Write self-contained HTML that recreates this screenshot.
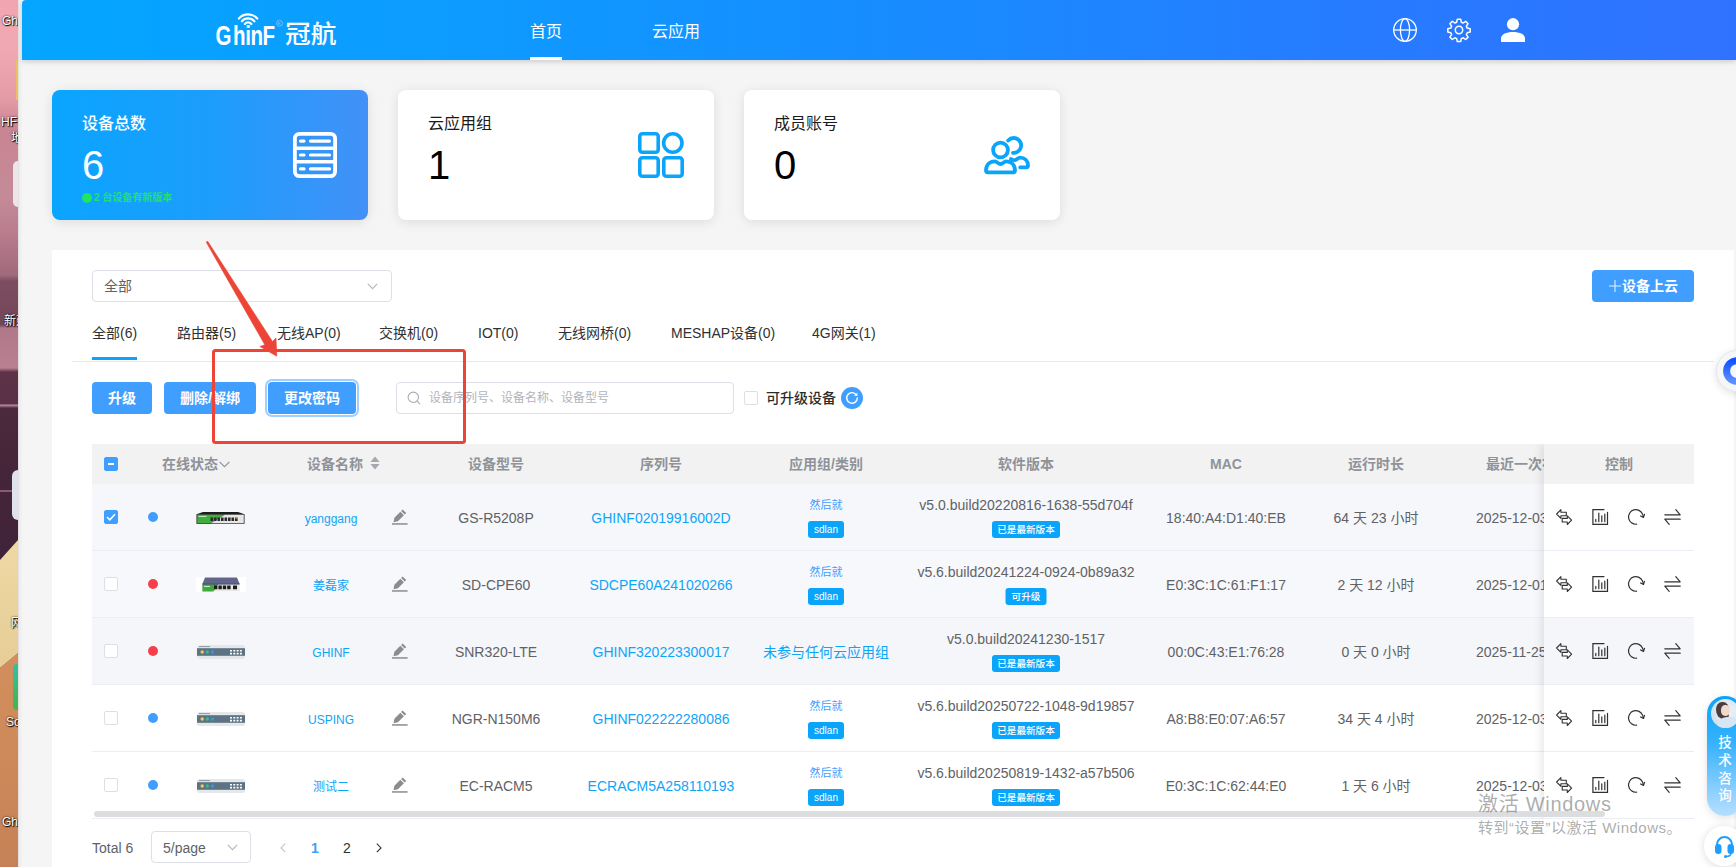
<!DOCTYPE html>
<html lang="zh-CN">
<head>
<meta charset="utf-8">
<title>冠航云平台 - 首页</title>
<style>
*{box-sizing:border-box;margin:0;padding:0}
html,body{width:1736px;height:867px;overflow:hidden;background:#f5f5f5}
body{position:relative;font-family:"Liberation Sans","Noto Sans CJK SC",sans-serif;font-size:14px;color:#606266;-webkit-font-smoothing:antialiased}
.abs{position:absolute}
.t{position:absolute;white-space:nowrap;line-height:20px;height:20px}
.c{transform:translateX(-50%);text-align:center}
svg{position:absolute;overflow:visible}
/* left desktop strip */
#desk{left:0;top:0;width:18px;height:867px;overflow:hidden;background:linear-gradient(180deg,#f2a5b0 0,#f0a9b3 50px,#e39aa5 100px,#c98593 130px,#c48a98 200px,#b87c8c 235px,#a06a7c 275px,#7d4c60 281px,#74465a 325px,#b07888 328px,#b88090 368px,#5e3348 372px,#5a3046 404px,#c090a0 405px,#4c2a3e 408px,#452539 470px,#40233a 556px,#3f2239 700px,#c58256 701px,#c58256 867px)}
#desk .dl{position:absolute;color:#fff;font-size:12px;line-height:14px;white-space:nowrap;text-shadow:0 0 2px #000,1px 1px 1px #000}
#frame{left:18px;top:0;width:4px;height:867px;background:linear-gradient(90deg,#d9d4d6 0,#ededed 1px,#f2f2f2 100%)}
/* header */
#hdr{left:22px;top:0;width:1714px;height:60px;border-top-left-radius:4px;background:linear-gradient(90deg,#04a6ff 0%,#0d9bff 25%,#178dff 50%,#257dff 75%,#3072ff 100%);box-shadow:0 2px 5px rgba(0,0,0,.16)}
.nav{color:#fff;font-size:16px;line-height:22px;height:22px}
/* cards */
.card{position:absolute;top:90px;width:316px;height:130px;border-radius:8px;background:#fff;box-shadow:0 2px 12px rgba(0,0,0,.10)}
.card .ttl{position:absolute;left:30px;top:23px;font-size:16px;line-height:22px;color:#1a1a1a;white-space:nowrap}
.card .num{position:absolute;left:30px;top:52px;font-size:40px;line-height:46px;color:#000;white-space:nowrap}
#c1{left:52px;background:linear-gradient(90deg,#0aa5ff 0%,#1c9dfc 50%,#4291f7 100%)}
#c1 .ttl,#c1 .num{color:#fff}
#c1 .ttl{font-weight:500}
/* panel */
#panel{left:52px;top:250px;width:1682px;height:617px;background:#fff}
.sel{position:absolute;border:1px solid #dcdfe6;border-radius:4px;background:#fff}
.btn{position:absolute;top:382px;height:32px;border-radius:4px;background:#409eff;color:#fff;font-weight:700;font-size:14px;line-height:32px;text-align:center;white-space:nowrap}
.tab{font-size:14px;color:#303133}
.th{color:#8f9299;font-weight:700;font-size:14px}
.row{position:absolute;left:92px;width:1602px;height:67px;border-bottom:1px solid #ebeef5}
.lk{color:#0ea5f7}
.tag{position:absolute;height:17px;border-radius:3px;background:#0aa5fb;color:#fff;font-size:9.6px;font-weight:500;line-height:17px;text-align:center;white-space:nowrap;transform:translateX(-50%)}
.cb{position:absolute;width:14px;height:14px;border:1px solid #dcdfe6;border-radius:2px;background:#fff}
.cb.on{background:#409eff;border-color:#409eff}
.dot{position:absolute;width:10px;height:10px;border-radius:50%}
</style>
</head>
<body>
<!-- desktop strip visible at the left of the browser window -->
<div id="desk" class="abs">
  <div class="abs" style="left:0;top:520px;width:18px;height:347px;background:linear-gradient(180deg,#d8935f 0,#d08b5b 60%,#c58256 100%);clip-path:polygon(0 148px,18px 133px,18px 347px,0 347px)"></div>
  <div class="abs" style="left:0;top:520px;width:18px;height:160px;background:linear-gradient(180deg,#efdaa6,#e6cc95);clip-path:polygon(0 40px,18px 20px,18px 133px,0 148px)"></div>
  <div class="abs" style="left:0;top:490px;width:18px;height:2px;background:#8a5a70"></div>
  <span class="dl" style="left:2px;top:14px">Gh</span>
  <span class="dl" style="left:1px;top:115px">HF</span>
  <span class="dl" style="left:11px;top:131px">地</span>
  <span class="dl" style="left:4px;top:314px">新建</span>
  <span class="dl" style="left:11px;top:616px">网</span>
  <span class="dl" style="left:6px;top:715px">So</span>
  <span class="dl" style="left:2px;top:815px">Gh</span>
  <div class="abs" style="left:13px;top:161px;width:12px;height:46px;border-radius:5px 0 0 5px;background:#ece6ea"></div>
  <div class="abs" style="left:12px;top:470px;width:12px;height:50px;border-radius:6px 0 0 6px;background:#dfe3ee"></div>
  <div class="abs" style="left:13px;top:664px;width:10px;height:46px;border-radius:4px 0 0 4px;background:linear-gradient(180deg,#2fc3a0,#49b24a)"></div>
  <div class="abs" style="left:15.500px;top:60px;width:4px;height:40px;background:#ecc060"></div>
</div>
<div id="frame" class="abs"></div>

<!-- top header -->
<div id="hdr" class="abs"></div>
<!-- logo -->
<svg style="left:214px;top:12px" width="126" height="36" viewBox="0 0 126 36" fill="none">
  <g stroke="#fff" stroke-linecap="round" fill="none" stroke-width="2.200">
    <path d="M24.900 6.550A12.400 12.400 0 0 1 43.300 6.550"/>
    <path d="M27.860 9.230A8.400 8.400 0 0 1 40.340 9.230"/>
    <path d="M30.830 11.910A4.400 4.400 0 0 1 37.370 11.910"/>
  </g>
  <circle cx="65.500" cy="11.300" r="3" stroke="#fff" stroke-opacity=".55" stroke-width=".600"/>
  <text transform="scale(.76,1)" x="2 24.900 41.100 48.200 63.800" y="32.700" font-family="'Liberation Sans',sans-serif" font-weight="700" font-size="27" fill="#fff">GhinF</text>
  <text x="71" y="30.900" font-family="'Liberation Sans','Noto Sans CJK SC',sans-serif" font-weight="500" font-size="24.500" fill="#fff" textLength="51.500" lengthAdjust="spacingAndGlyphs">冠航</text>
  <text x="63.600" y="12.800" font-family="'Liberation Sans',sans-serif" font-size="4" fill="#fff" fill-opacity=".6">R</text>
</svg>
<div class="t nav" style="left:530px;top:21px">首页</div>
<div class="abs" style="left:530px;top:57px;width:32px;height:3px;background:#fff"></div>
<div class="t nav" style="left:652px;top:21px">云应用</div>
<!-- header icons -->
<svg style="left:1393px;top:18px" width="24" height="24" viewBox="0 0 24 24" fill="none" stroke="#fff" stroke-width="1.3">
  <circle cx="12" cy="12" r="11.3"/><ellipse cx="12" cy="12" rx="4.6" ry="11.3"/><path d="M.7 12h22.6"/>
</svg>
<svg style="left:1447px;top:18px" width="24" height="24" viewBox="0 0 24 24" fill="none" stroke="#fff" stroke-width="1.5" stroke-linejoin="round">
  <path d="M10.3 1.2h3.4l.6 3 1.9.8 2.5-1.7 2.4 2.4-1.700 2.500.8 1.9 3 .6v3.400l-3 .6-.8 1.9 1.700 2.500-2.400 2.400-2.500-1.700-1.900.8-.6 3h-3.400l-.6-3-1.900-.8-2.500 1.700-2.400-2.400 1.700-2.500-.8-1.900-3-.6v-3.400l3-.6.8-1.900-1.700-2.500 2.400-2.400 2.500 1.700 1.900-.8z"/>
  <circle cx="12" cy="12" r="3.700"/>
</svg>
<svg style="left:1501px;top:18px" width="24" height="24" viewBox="0 0 24 24" fill="#fff">
  <circle cx="12" cy="6.200" r="6.100"/><path d="M0 24v-3.600c0-4.200 5.500-6.400 12-6.400s12 2.200 12 6.400V24z"/>
</svg>
<!-- stat cards -->
<div class="card" id="c1">
  <div class="ttl">设备总数</div>
  <div class="num">6</div>
  <div class="abs" style="left:30px;top:103px;width:10px;height:10px;border-radius:50%;background:#1ee562"></div>
  <div class="t" style="left:42px;top:101px;font-size:10px;line-height:14px;height:14px;font-weight:700;color:#22e06a">2 台设备有新版本</div>
  <svg style="left:241px;top:42px" width="44" height="46" viewBox="0 0 44 46" fill="none" stroke="#fff" stroke-linecap="round">
    <rect x="1.900" y="1.900" width="40.200" height="42.200" rx="4.500" stroke-width="3.800"/>
    <path d="M2 16.200h40M2 29.800h40" stroke-width="3.600"/>
    <path d="M7.500 9.100h3.500M17.500 9.100h19M7.500 23h3.500M17.500 23h19M7.500 36.900h3.500M17.500 36.900h19" stroke-width="3.200"/>
  </svg>
</div>
<div class="card" style="left:398px">
  <div class="ttl">云应用组</div>
  <div class="num">1</div>
  <svg style="left:240px;top:42px" width="46" height="46" viewBox="0 0 46 46" fill="none" stroke="#0aa5fb" stroke-width="3.600">
    <rect x="1.800" y="1.800" width="18.400" height="18.400" rx="2.500"/>
    <circle cx="34.800" cy="11" r="9.200"/>
    <rect x="1.800" y="25.800" width="18.400" height="18.400" rx="2.500"/>
    <rect x="25.800" y="25.800" width="18.400" height="18.400" rx="2.500"/>
  </svg>
</div>
<div class="card" style="left:744px">
  <div class="ttl">成员账号</div>
  <div class="num">0</div>
  <svg style="left:239px;top:45px" width="48" height="40" viewBox="0 0 48 40" fill="none" stroke="#0aa5fb" stroke-width="3.800" stroke-linecap="round" stroke-linejoin="round">
    <circle cx="17.500" cy="15" r="7.400"/>
    <path d="M25.200 5.500a7.400 7.400 0 1 1 4.800 12.300"/>
    <path d="M3 35.600c0-5.500 3.600-9.200 9-9.200 2 0 3.300 2.600 5.500 2.600s3.500-2.600 5.500-2.600c5.400 0 9 3.700 9 9.200 0 1.200-.8 1.800-1.800 1.800H4.800c-1 0-1.800-.6-1.800-1.800z"/>
    <path d="M28 23.900c1.200.9 2.300 1.300 3.400 1.300 2.200 0 3.300-2.600 5.600-2.600 4.800 0 8 3.400 8 7.800 0 1.200-.7 1.900-1.800 1.900h-6"/>
  </svg>
</div>
<!-- main panel -->
<div id="panel" class="abs"></div>
<div class="sel" style="left:92px;top:270px;width:300px;height:32px"></div>
<div class="t" style="left:104px;top:276px;color:#606266">全部</div>
<svg style="left:367px;top:283px" width="11" height="7" viewBox="0 0 11 7" fill="none" stroke="#b4b8bf" stroke-width="1.200"><path d="M.8.900l4.700 4.700L10.200.900"/></svg>
<div class="btn" style="left:1592px;top:270px;width:102px;text-align:left;padding-left:30px">设备上云</div>
<svg style="left:1609px;top:280px" width="12" height="12" viewBox="0 0 12 12" stroke="#fff" stroke-opacity=".85" stroke-width="1.100"><path d="M6 0v12M0 6h12"/></svg>

<!-- tabs -->
<div class="abs" style="left:72px;top:361px;width:1642px;height:1px;background:#e8e8e8"></div>
<div class="abs" style="left:92px;top:357px;width:45px;height:3px;background:#0aa5fb"></div>
<div class="t tab" style="left:92px;top:323px">全部(6)</div>
<div class="t tab" style="left:177px;top:323px">路由器(5)</div>
<div class="t tab" style="left:277px;top:323px">无线AP(0)</div>
<div class="t tab" style="left:379px;top:323px">交换机(0)</div>
<div class="t tab" style="left:478px;top:323px">IOT(0)</div>
<div class="t tab" style="left:558px;top:323px">无线网桥(0)</div>
<div class="t tab" style="left:671px;top:323px">MESHAP设备(0)</div>
<div class="t tab" style="left:812px;top:323px">4G网关(1)</div>

<!-- toolbar -->
<div class="btn" style="left:92px;width:60px">升级</div>
<div class="btn" style="left:164px;width:92px">删除/解绑</div>
<div class="btn" style="left:268px;width:88px;box-shadow:0 0 0 1px #fff,0 0 0 3px #a0cfff">更改密码</div>
<div class="sel" style="left:396px;top:382px;width:338px;height:32px"></div>
<svg style="left:407px;top:391px" width="14" height="14" viewBox="0 0 14 14" fill="none" stroke="#a8abb2" stroke-width="1.100" stroke-linecap="round"><circle cx="6.300" cy="6.300" r="5.200"/><path d="M10.200 10.200l2.600 2.600"/></svg>
<div class="t" style="left:429px;top:388px;font-size:12px;color:#b1b4bb">设备序列号、设备名称、设备型号</div>
<div class="cb" style="left:744px;top:391px"></div>
<div class="t" style="left:766px;top:388px;font-weight:500;color:#2b2b2b">可升级设备</div>
<svg style="left:841px;top:387px" width="22" height="22" viewBox="0 0 22 22" fill="none"><circle cx="11" cy="11" r="11" fill="#409eff"/><path d="M15.600 8.300A5.300 5.300 0 1 0 16.300 11" stroke="#fff" stroke-width="1.400" stroke-linecap="round"/><path d="M16.400 5.400v3.400H13z" fill="#fff"/></svg>
<!-- table header -->
<div class="abs" style="left:92px;top:444px;width:1602px;height:40px;background:#f2f2f2"></div>
<div class="abs" id="tbody" style="left:92px;top:444px;width:1452px;height:375px;overflow:hidden">
<div class="cb on" style="left:12px;top:13px"></div><div class="abs" style="left:16px;top:19px;width:6px;height:2px;background:#fff"></div>
<div class="t th" style="left:70px;top:10px;">在线状态</div>
<svg style="left:127px;top:17px" width="11" height="7" viewBox="0 0 11 7" fill="none" stroke="#8f9299" stroke-width="1.100"><path d="M.600.800l4.900 4.900L10.400.800"/></svg>
<div class="t th" style="left:215px;top:10px;">设备名称</div>
<svg style="left:278px;top:12px" width="10" height="14" viewBox="0 0 10 14" fill="#a5a8ae"><path d="M5 .500l4.600 5.500H.400zM5 13.500L.400 8h9.200z"/></svg>
<div class="t c th" style="left:404px;top:10px;">设备型号</div>
<div class="t c th" style="left:569px;top:10px;">序列号</div>
<div class="t c th" style="left:734px;top:10px;">应用组/类别</div>
<div class="t c th" style="left:934px;top:10px;">软件版本</div>
<div class="t c th" style="left:1134px;top:10px;">MAC</div>
<div class="t c th" style="left:1284px;top:10px;">运行时长</div>
<div class="t th" style="left:1394px;top:10px;">最近一次在线时间</div>
<div class="row" style="left:0;top:40px;background:#f6f7fb"></div>
<div class="cb on" style="left:12px;top:66px"></div><svg style="left:14px;top:69px" width="10" height="8" viewBox="0 0 10 8" fill="none" stroke="#fff" stroke-width="1.500"><path d="M1 4l2.800 2.800L9 1.200"/></svg>
<div class="dot" style="left:56px;top:68px;background:#409eff"></div>
<svg style="left:104px;top:68px" width="49" height="12" viewBox="0 0 49 12"><path d="M7 0h35l6.500 2.200H.500z" fill="#1d1d1d"/><rect x=".5" y="2.200" width="48" height="9.600" fill="#161616"/><path d="M1.200 2.800h27.500L15 11.200H1.200z" fill="#3fae3c"/><path d="M28.700 2.800H47.800v8.400H15z" fill="#e6e6e6"/><path d="M14.500 5.600h2.600v3.400h-2.600zM18 5.600h2.600v3.400H18zM21.500 5.600h2.600v3.400h-2.600zM25 5.600h2.600v3.400H25zM28.500 5.600h2.600v3.400h-2.600zM32 5.600h2.600v3.400H32zM35.500 5.600h2.600v3.400h-2.600zM39 5.600h2.600v3.400H39z" fill="#2a2a2a"/><path d="M39.400 6.200h1.800" stroke="#d8a040" stroke-width="1"/><path d="M2.500 4.400h8" stroke="#c9efc4" stroke-width="1"/></svg>
<div class="t c lk" style="left:239px;top:65px;font-size:12px">yanggang</div>
<svg style="left:300px;top:65px" width="16" height="16" viewBox="0 0 16 16" fill="#8c8c8c"><path d="M10.600.400l3.600 3.600-1.500 1.500-3.600-3.600zM8.300 2.700l3.600 3.600-6 6-4.400 1 .9-4.500z"/><rect x="0" y="14.200" width="15.600" height="1.500"/></svg>
<div class="t c " style="left:404px;top:64px;">GS-R5208P</div>
<div class="t c lk" style="left:569px;top:64px;">GHINF02019916002D</div>
<div class="t c " style="left:734px;top:51px;font-size:11px;color:#409eff">然后就</div>
<div class="tag" style="left:734px;top:77px;width:36px;font-size:10px">sdlan</div>
<div class="t c " style="left:934px;top:51px;">v5.0.build20220816-1638-55d704f</div>
<div class="tag" style="left:934px;top:77px;width:68px">已是最新版本</div>
<div class="t c " style="left:1134px;top:64px;">18:40:A4:D1:40:EB</div>
<div class="t c " style="left:1284px;top:64px;">64 天 23 小时</div>
<div class="t " style="left:1384px;top:64px;">2025-12-03</div>
<div class="row" style="left:0;top:107px;background:#f7f8fb"></div>
<div class="cb" style="left:12px;top:133px"></div>
<div class="dot" style="left:56px;top:135px;background:#f5404b"></div>
<svg style="left:104px;top:133px" width="50" height="15" viewBox="0 0 50 15"><rect width="50" height="15" fill="#fff"/><path d="M9 .600h32l2.600 6.400H6.400z" fill="#62658a"/><rect x="6.400" y="7" width="37.200" height="7.400" fill="#e8e8e4"/><path d="M6.400 7h16l-5 7.400h-11z" fill="#3daa3b"/><rect x="6.400" y="6.400" width="37.200" height="1.200" fill="#4e5173"/><path d="M18 8.600h3.400v3.600H18zM22.400 8.600h3.400v3.600h-3.400zM26.800 8.600h3.400v3.600h-3.400zM31.200 8.600h3.400v3.600h-3.400zM37 8.600h4v3.600h-4z" fill="#1b1b1b"/><path d="M8 9.400h6" stroke="#d8f3d4" stroke-width="1"/></svg>
<div class="t c lk" style="left:239px;top:132px;font-size:12px">姜磊家</div>
<svg style="left:300px;top:132px" width="16" height="16" viewBox="0 0 16 16" fill="#8c8c8c"><path d="M10.600.400l3.600 3.600-1.500 1.500-3.600-3.600zM8.300 2.700l3.600 3.600-6 6-4.400 1 .9-4.500z"/><rect x="0" y="14.200" width="15.600" height="1.500"/></svg>
<div class="t c " style="left:404px;top:131px;">SD-CPE60</div>
<div class="t c lk" style="left:569px;top:131px;">SDCPE60A241020266</div>
<div class="t c " style="left:734px;top:118px;font-size:11px;color:#409eff">然后就</div>
<div class="tag" style="left:734px;top:144px;width:36px;font-size:10px">sdlan</div>
<div class="t c " style="left:934px;top:118px;">v5.6.build20241224-0924-0b89a32</div>
<div class="tag" style="left:934px;top:144px;width:41px">可升级</div>
<div class="t c " style="left:1134px;top:131px;">E0:3C:1C:61:F1:17</div>
<div class="t c " style="left:1284px;top:131px;">2 天 12 小时</div>
<div class="t " style="left:1384px;top:131px;">2025-12-01</div>
<div class="row" style="left:0;top:174px;background:#f5f6fa"></div>
<div class="cb" style="left:12px;top:200px"></div>
<div class="dot" style="left:56px;top:202px;background:#f5404b"></div>
<svg style="left:105px;top:201px" width="48" height="14" viewBox="0 0 48 14"><rect width="48" height="14" rx="2.500" fill="#e4e8eb"/><rect y="3.200" width="48" height="7.600" fill="#5d7283"/><path d="M2 1.600h11" stroke="#8a98a3" stroke-width="1"/><circle cx="5.200" cy="7" r="1.700" fill="#f6c944"/><circle cx="10.300" cy="7" r="1.700" fill="#2ebd93"/><circle cx="15.400" cy="7" r="1.700" fill="#2d9be0"/><path d="M33 5h2v1.600h-2zM36.300 5h2v1.600h-2zM39.600 5h2v1.600h-2zM42.900 5h2v1.600h-2zM33 7.800h2v1.600h-2zM36.300 7.800h2v1.600h-2zM39.600 7.800h2v1.600h-2zM42.900 7.800h2v1.600h-2z" fill="#fff"/></svg>
<div class="t c lk" style="left:239px;top:199px;font-size:12px">GHINF</div>
<svg style="left:300px;top:199px" width="16" height="16" viewBox="0 0 16 16" fill="#8c8c8c"><path d="M10.600.400l3.600 3.600-1.500 1.500-3.600-3.600zM8.300 2.700l3.600 3.600-6 6-4.400 1 .9-4.500z"/><rect x="0" y="14.200" width="15.600" height="1.500"/></svg>
<div class="t c " style="left:404px;top:198px;">SNR320-LTE</div>
<div class="t c lk" style="left:569px;top:198px;">GHINF320223300017</div>
<div class="t c lk" style="left:734px;top:198px;">未参与任何云应用组</div>
<div class="t c " style="left:934px;top:185px;">v5.0.build20241230-1517</div>
<div class="tag" style="left:934px;top:211px;width:68px">已是最新版本</div>
<div class="t c " style="left:1134px;top:198px;">00:0C:43:E1:76:28</div>
<div class="t c " style="left:1284px;top:198px;">0 天 0 小时</div>
<div class="t " style="left:1384px;top:198px;">2025-11-25</div>
<div class="row" style="left:0;top:241px;background:#fff"></div>
<div class="cb" style="left:12px;top:267px"></div>
<div class="dot" style="left:56px;top:269px;background:#409eff"></div>
<svg style="left:105px;top:268px" width="48" height="14" viewBox="0 0 48 14"><rect width="48" height="14" rx="2.500" fill="#e4e8eb"/><rect y="3.200" width="48" height="7.600" fill="#5d7283"/><path d="M2 1.600h11" stroke="#8a98a3" stroke-width="1"/><circle cx="5.200" cy="7" r="1.700" fill="#f6c944"/><circle cx="10.300" cy="7" r="1.700" fill="#2ebd93"/><circle cx="15.400" cy="7" r="1.700" fill="#2d9be0"/><path d="M33 5h2v1.600h-2zM36.300 5h2v1.600h-2zM39.600 5h2v1.600h-2zM42.900 5h2v1.600h-2zM33 7.800h2v1.600h-2zM36.300 7.800h2v1.600h-2zM39.600 7.800h2v1.600h-2zM42.900 7.800h2v1.600h-2z" fill="#fff"/></svg>
<div class="t c lk" style="left:239px;top:266px;font-size:12px">USPING</div>
<svg style="left:300px;top:266px" width="16" height="16" viewBox="0 0 16 16" fill="#8c8c8c"><path d="M10.600.400l3.600 3.600-1.500 1.500-3.600-3.600zM8.300 2.700l3.600 3.600-6 6-4.400 1 .9-4.500z"/><rect x="0" y="14.200" width="15.600" height="1.500"/></svg>
<div class="t c " style="left:404px;top:265px;">NGR-N150M6</div>
<div class="t c lk" style="left:569px;top:265px;">GHINF022222280086</div>
<div class="t c " style="left:734px;top:252px;font-size:11px;color:#409eff">然后就</div>
<div class="tag" style="left:734px;top:278px;width:36px;font-size:10px">sdlan</div>
<div class="t c " style="left:934px;top:252px;">v5.6.build20250722-1048-9d19857</div>
<div class="tag" style="left:934px;top:278px;width:68px">已是最新版本</div>
<div class="t c " style="left:1134px;top:265px;">A8:B8:E0:07:A6:57</div>
<div class="t c " style="left:1284px;top:265px;">34 天 4 小时</div>
<div class="t " style="left:1384px;top:265px;">2025-12-03</div>
<div class="row" style="left:0;top:308px;background:#fff"></div>
<div class="cb" style="left:12px;top:334px"></div>
<div class="dot" style="left:56px;top:336px;background:#409eff"></div>
<svg style="left:105px;top:335px" width="48" height="14" viewBox="0 0 48 14"><rect width="48" height="14" rx="2.500" fill="#e4e8eb"/><rect y="3.200" width="48" height="7.600" fill="#5d7283"/><path d="M2 1.600h11" stroke="#8a98a3" stroke-width="1"/><circle cx="5.200" cy="7" r="1.700" fill="#f6c944"/><circle cx="10.300" cy="7" r="1.700" fill="#2ebd93"/><circle cx="15.400" cy="7" r="1.700" fill="#2d9be0"/><path d="M33 5h2v1.600h-2zM36.300 5h2v1.600h-2zM39.600 5h2v1.600h-2zM42.900 5h2v1.600h-2zM33 7.800h2v1.600h-2zM36.300 7.800h2v1.600h-2zM39.600 7.800h2v1.600h-2zM42.900 7.800h2v1.600h-2z" fill="#fff"/></svg>
<div class="t c lk" style="left:239px;top:333px;font-size:12px">测试二</div>
<svg style="left:300px;top:333px" width="16" height="16" viewBox="0 0 16 16" fill="#8c8c8c"><path d="M10.600.400l3.600 3.600-1.500 1.500-3.600-3.600zM8.300 2.700l3.600 3.600-6 6-4.400 1 .9-4.500z"/><rect x="0" y="14.200" width="15.600" height="1.500"/></svg>
<div class="t c " style="left:404px;top:332px;">EC-RACM5</div>
<div class="t c lk" style="left:569px;top:332px;">ECRACM5A258110193</div>
<div class="t c " style="left:734px;top:319px;font-size:11px;color:#409eff">然后就</div>
<div class="tag" style="left:734px;top:345px;width:36px;font-size:10px">sdlan</div>
<div class="t c " style="left:934px;top:319px;">v5.6.build20250819-1432-a57b506</div>
<div class="tag" style="left:934px;top:345px;width:68px">已是最新版本</div>
<div class="t c " style="left:1134px;top:332px;">E0:3C:1C:62:44:E0</div>
<div class="t c " style="left:1284px;top:332px;">1 天 6 小时</div>
<div class="t " style="left:1384px;top:332px;">2025-12-03</div>
</div>
<!-- fixed control column -->
<div class="abs" id="fixed" style="left:1544px;top:444px;width:150px;height:375px;background:#fff;box-shadow:-3px 0 8px rgba(0,0,0,.09);clip-path:inset(0 0 0 -14px)">
<div class="abs" style="left:0;top:0;width:150px;height:40px;background:#f2f2f2"></div>
<div class="t c th" style="left:75px;top:10px;">控制</div>
<div class="row" style="left:0;width:150px;top:40px;background:#fff"></div>
<svg style="left:12px;top:65px" width="16" height="16" viewBox="0 0 16 16" fill="none" stroke="#303133" stroke-width="1.100" stroke-linejoin="round"><path d="M.600 5l4.300-4.300v2.500h5.400v3.600H4.900v2.500z"/><path d="M15.600 11.200l-4.300 4.300V13H6.200V9.400h5.100V6.900z" fill="#fff"/></svg>
<svg style="left:48px;top:65px" width="16" height="16" viewBox="0 0 16 16" fill="none" stroke="#303133" stroke-width="1.200" stroke-linecap="round"><path d="M12 .600H.900v14.800h14.600V3.400"/><path d="M3.800 10.400v2.300M6.800 4v8.700M9.800 6.800v5.900M12.800 5.200v7.500"/></svg>
<svg style="left:84px;top:65px" width="17" height="16" viewBox="0 0 17 16" fill="none" stroke="#303133" stroke-width="1.200" stroke-linecap="round" stroke-linejoin="round"><path d="M8.600 15.200A7.300 7.300 0 1 1 14.600 5.200l.9 3"/><path d="M12.600 7l2.900 1.400 1-3"/></svg>
<svg style="left:120px;top:65px" width="17" height="16" viewBox="0 0 17 16" fill="none" stroke="#303133" stroke-width="1.200" stroke-linecap="round" stroke-linejoin="round"><path d="M.800 5.800h15.400L11.800.700"/><path d="M16.200 10.200H.800l4.400 5.100"/></svg>
<div class="row" style="left:0;width:150px;top:107px;background:#fff"></div>
<svg style="left:12px;top:132px" width="16" height="16" viewBox="0 0 16 16" fill="none" stroke="#303133" stroke-width="1.100" stroke-linejoin="round"><path d="M.600 5l4.300-4.300v2.500h5.400v3.600H4.900v2.500z"/><path d="M15.600 11.200l-4.300 4.300V13H6.200V9.400h5.100V6.900z" fill="#fff"/></svg>
<svg style="left:48px;top:132px" width="16" height="16" viewBox="0 0 16 16" fill="none" stroke="#303133" stroke-width="1.200" stroke-linecap="round"><path d="M12 .600H.900v14.800h14.600V3.400"/><path d="M3.800 10.400v2.300M6.800 4v8.700M9.800 6.800v5.900M12.800 5.200v7.500"/></svg>
<svg style="left:84px;top:132px" width="17" height="16" viewBox="0 0 17 16" fill="none" stroke="#303133" stroke-width="1.200" stroke-linecap="round" stroke-linejoin="round"><path d="M8.600 15.200A7.300 7.300 0 1 1 14.600 5.200l.9 3"/><path d="M12.600 7l2.900 1.400 1-3"/></svg>
<svg style="left:120px;top:132px" width="17" height="16" viewBox="0 0 17 16" fill="none" stroke="#303133" stroke-width="1.200" stroke-linecap="round" stroke-linejoin="round"><path d="M.800 5.800h15.400L11.800.700"/><path d="M16.200 10.200H.800l4.400 5.100"/></svg>
<div class="row" style="left:0;width:150px;top:174px;background:#f5f6fa"></div>
<svg style="left:12px;top:199px" width="16" height="16" viewBox="0 0 16 16" fill="none" stroke="#303133" stroke-width="1.100" stroke-linejoin="round"><path d="M.600 5l4.300-4.300v2.500h5.400v3.600H4.900v2.500z"/><path d="M15.600 11.200l-4.300 4.300V13H6.200V9.400h5.100V6.900z" fill="#fff"/></svg>
<svg style="left:48px;top:199px" width="16" height="16" viewBox="0 0 16 16" fill="none" stroke="#303133" stroke-width="1.200" stroke-linecap="round"><path d="M12 .600H.900v14.800h14.600V3.400"/><path d="M3.800 10.400v2.300M6.800 4v8.700M9.800 6.800v5.900M12.800 5.200v7.500"/></svg>
<svg style="left:84px;top:199px" width="17" height="16" viewBox="0 0 17 16" fill="none" stroke="#303133" stroke-width="1.200" stroke-linecap="round" stroke-linejoin="round"><path d="M8.600 15.200A7.300 7.300 0 1 1 14.600 5.200l.9 3"/><path d="M12.600 7l2.900 1.400 1-3"/></svg>
<svg style="left:120px;top:199px" width="17" height="16" viewBox="0 0 17 16" fill="none" stroke="#303133" stroke-width="1.200" stroke-linecap="round" stroke-linejoin="round"><path d="M.800 5.800h15.400L11.800.700"/><path d="M16.200 10.200H.800l4.400 5.100"/></svg>
<div class="row" style="left:0;width:150px;top:241px;background:#fff"></div>
<svg style="left:12px;top:266px" width="16" height="16" viewBox="0 0 16 16" fill="none" stroke="#303133" stroke-width="1.100" stroke-linejoin="round"><path d="M.600 5l4.300-4.300v2.500h5.400v3.600H4.900v2.500z"/><path d="M15.600 11.200l-4.300 4.300V13H6.200V9.400h5.100V6.900z" fill="#fff"/></svg>
<svg style="left:48px;top:266px" width="16" height="16" viewBox="0 0 16 16" fill="none" stroke="#303133" stroke-width="1.200" stroke-linecap="round"><path d="M12 .600H.900v14.800h14.600V3.400"/><path d="M3.800 10.400v2.300M6.800 4v8.700M9.800 6.800v5.900M12.800 5.200v7.500"/></svg>
<svg style="left:84px;top:266px" width="17" height="16" viewBox="0 0 17 16" fill="none" stroke="#303133" stroke-width="1.200" stroke-linecap="round" stroke-linejoin="round"><path d="M8.600 15.200A7.300 7.300 0 1 1 14.600 5.200l.9 3"/><path d="M12.600 7l2.900 1.400 1-3"/></svg>
<svg style="left:120px;top:266px" width="17" height="16" viewBox="0 0 17 16" fill="none" stroke="#303133" stroke-width="1.200" stroke-linecap="round" stroke-linejoin="round"><path d="M.800 5.800h15.400L11.800.700"/><path d="M16.200 10.200H.800l4.400 5.100"/></svg>
<div class="row" style="left:0;width:150px;top:308px;background:#fff"></div>
<svg style="left:12px;top:333px" width="16" height="16" viewBox="0 0 16 16" fill="none" stroke="#303133" stroke-width="1.100" stroke-linejoin="round"><path d="M.600 5l4.300-4.300v2.500h5.400v3.600H4.900v2.500z"/><path d="M15.600 11.200l-4.300 4.300V13H6.200V9.400h5.100V6.900z" fill="#fff"/></svg>
<svg style="left:48px;top:333px" width="16" height="16" viewBox="0 0 16 16" fill="none" stroke="#303133" stroke-width="1.200" stroke-linecap="round"><path d="M12 .600H.900v14.800h14.600V3.400"/><path d="M3.800 10.400v2.300M6.800 4v8.700M9.800 6.800v5.900M12.800 5.200v7.500"/></svg>
<svg style="left:84px;top:333px" width="17" height="16" viewBox="0 0 17 16" fill="none" stroke="#303133" stroke-width="1.200" stroke-linecap="round" stroke-linejoin="round"><path d="M8.600 15.200A7.300 7.300 0 1 1 14.600 5.200l.9 3"/><path d="M12.600 7l2.900 1.400 1-3"/></svg>
<svg style="left:120px;top:333px" width="17" height="16" viewBox="0 0 17 16" fill="none" stroke="#303133" stroke-width="1.200" stroke-linecap="round" stroke-linejoin="round"><path d="M.800 5.800h15.400L11.800.700"/><path d="M16.200 10.200H.800l4.400 5.100"/></svg>
</div>
<!-- horizontal scrollbar of table -->
<div class="abs" style="left:94px;top:811px;width:1511px;height:6px;border-radius:3px;background:#dcdddf"></div>

<!-- pagination -->
<div class="t" style="left:92px;top:838px;color:#606266">Total 6</div>
<div class="sel" style="left:151px;top:831px;width:100px;height:32px"></div>
<div class="t" style="left:163px;top:838px;color:#606266">5/page</div>
<svg style="left:227px;top:844px" width="11" height="7" viewBox="0 0 11 7" fill="none" stroke="#b4b8bf" stroke-width="1.200"><path d="M.8.900l4.700 4.700L10.200.900"/></svg>
<svg style="left:280px;top:843px" width="6" height="10" viewBox="0 0 6 10" fill="none" stroke="#c0c4cc" stroke-width="1.100"><path d="M5.200.700L1 4.900l4.200 4.200"/></svg>
<div class="t c" style="left:315px;top:838px;color:#409eff;font-weight:700">1</div>
<div class="t c" style="left:347px;top:838px;color:#303133">2</div>
<svg style="left:376px;top:843px" width="6" height="10" viewBox="0 0 6 10" fill="none" stroke="#303133" stroke-width="1.100"><path d="M.800.700L5 4.900.800 9.100"/></svg>

<!-- windows activation watermark -->
<div class="t" style="left:1478px;top:790px;font-size:20px;line-height:28px;height:28px;letter-spacing:.7px;color:rgba(120,120,120,.62)">激活 Windows</div>
<div class="t" style="left:1478px;top:817px;font-size:15px;line-height:22px;height:22px;letter-spacing:.5px;color:rgba(120,120,120,.62)">转到“设置”以激活 Windows。</div>

<!-- floating assistant ball (cut by window edge) -->
<div class="abs" style="left:1716px;top:350px;width:42px;height:42px;border-radius:50%;background:#f6f7fa;border:1px solid #e6e8ee;box-shadow:0 2px 8px rgba(0,0,0,.12)"></div>
<svg style="left:1723px;top:357px" width="28" height="28" viewBox="0 0 28 28" fill="none"><defs><linearGradient id="rg" x1="0" y1="0" x2="0" y2="1"><stop offset="0" stop-color="#1153ff"/><stop offset="1" stop-color="#5e8eff"/></linearGradient></defs><circle cx="14" cy="14" r="10.400" stroke="url(#rg)" stroke-width="7"/></svg>

<!-- tech support pill -->
<div class="abs" style="left:1707px;top:696px;width:36px;height:120px;border-radius:18px;background:linear-gradient(180deg,#09a4fb 0%,#37b2fc 40%,#8fd0fe 80%,#b5dfff 100%);box-shadow:0 2px 8px rgba(0,0,0,.12)"></div>
<div class="abs" style="left:1711px;top:699px;width:29px;height:29px;border-radius:50%;background:radial-gradient(circle at 60% 45%,#eef3f8 0,#dce8f1 50%,#c6d8e6 100%);overflow:hidden">
  <div class="abs" style="left:5px;top:3px;width:13px;height:17px;border-radius:50% 50% 30% 60%;background:#4b3d3f"></div>
  <div class="abs" style="left:10px;top:6px;width:9px;height:11px;border-radius:45%;background:#f3d8cc"></div>
  <div class="abs" style="left:6px;top:18px;width:24px;height:14px;border-radius:10px 10px 0 0;background:#d7e6f2"></div>
</div>
<div class="abs" style="left:1718px;top:734px;width:14px;font-size:13.500px;line-height:17.800px;font-weight:500;color:#fff;text-align:center">技<br>术<br>咨<br>询</div>

<!-- headset ball -->
<div class="abs" style="left:1704px;top:826px;width:40px;height:40px;border-radius:50%;background:#fff;box-shadow:0 1px 8px rgba(0,0,0,.14)"></div>
<svg style="left:1715px;top:835px" width="19" height="23" viewBox="0 0 19 23" fill="none" stroke="#1e9fff" stroke-width="2"><path d="M2 12V9.500a7.500 7.500 0 0 1 15 0V12"/><rect x="1" y="10" width="4.500" height="8" rx="2.200" fill="#1e9fff"/><rect x="13.500" y="10" width="4.500" height="8" rx="2.200" fill="#1e9fff"/><path d="M16 18c0 2.500-2 3.500-5 3.500" stroke-width="1.500"/><circle cx="10.500" cy="21.500" r="1.500" fill="#1e9fff" stroke="none"/></svg>

<!-- red annotation: arrow + rectangle -->
<svg style="left:0;top:0" width="1736" height="867" viewBox="0 0 1736 867" fill="none">
  <rect x="213.500" y="350.500" width="251" height="92" rx="2" stroke="#ec4537" stroke-width="3"/>
  <path d="M206.200 242.100L207.700 241.300 272.500 341.500 276 338 276.800 356.200 259.900 346.600 264.800 344.800z" fill="#ec4537" stroke="#ec4537" stroke-width=".6" stroke-linejoin="round"/>
</svg>
</body>
</html>
